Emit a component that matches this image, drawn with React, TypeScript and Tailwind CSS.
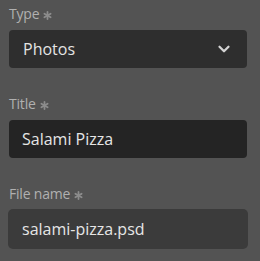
import { ChevronDown } from "lucide-react"

function Star() {
  return (
    <svg width="9" height="9" viewBox="0 0 9 9" className="ml-[4px] mt-[2px] text-[#8c8c8c]">
      <g stroke="currentColor" strokeWidth="1.8" strokeLinecap="round">
        <line x1="4.5" y1="0.9" x2="4.5" y2="8.1" />
        <line x1="1.4" y1="2.7" x2="7.6" y2="6.3" />
        <line x1="1.4" y1="6.3" x2="7.6" y2="2.7" />
      </g>
    </svg>
  )
}

function Label({ text }: { text: string }) {
  return (
    <div className="flex items-center h-5 leading-5 text-[14px] tracking-[-0.2px] text-[#b0b0b0]">
      <span>{text}</span>
      <Star />
    </div>
  )
}

export default function App() {
  return (
    <div
      className="w-[260px] h-[261px] bg-[#535353] pt-[4px] px-[9px]"
      style={{ fontFamily: '"Open Sans", "Noto Sans", sans-serif' }}
    >
      <Label text="Type" />
      <div className="mt-[6px] h-[38px] w-[238px] rounded-[4px] bg-[#2e2e2e] flex items-center justify-between pl-[14px] pr-[14px] text-[16px] text-[#e4e4e4]">
        <span>Photos</span>
        <ChevronDown className="w-[18px] h-[18px] text-[#d4d4d4]" strokeWidth={3} />
      </div>

      <div className="mt-[26px]">
        <Label text="Title" />
      </div>
      <div className="mt-[6px] h-[38px] w-[238px] rounded-[4px] bg-[#242424] flex items-center pl-[13px] text-[16px] text-[#e6e6e6]">
        Salami Pizza
      </div>

      <div className="mt-[26px]">
        <Label text="File name" />
      </div>
      <div className="mt-[5px] -ml-[1px] h-[40px] w-[240px] rounded-[5px] bg-[#3b3b3b] flex items-center pl-[14px] text-[16px] text-[#e6e6e6]">
        salami-pizza.psd
      </div>
    </div>
  )
}
